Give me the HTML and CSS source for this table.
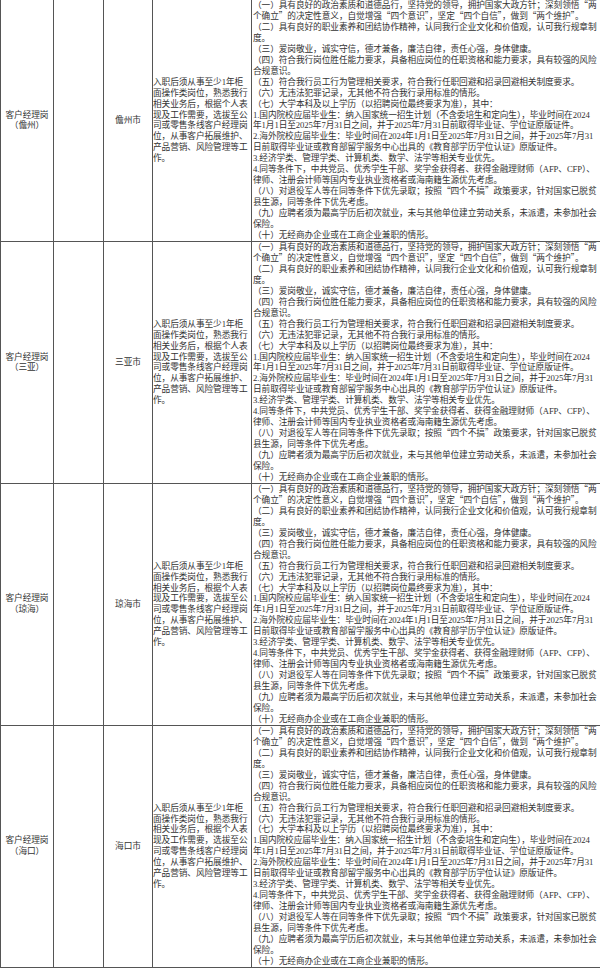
FILE: index.html
```html
<!DOCTYPE html>
<html lang="zh-CN">
<head>
<meta charset="utf-8">
<title>客户经理岗招聘条件</title>
<link rel="stylesheet" href="styles.css">
</head>
<body>
<table class="jobs">
<colgroup>
<col class="c-name"><col class="c-blank"><col class="c-city"><col class="c-duty"><col class="c-req">
</colgroup>
<tbody>
<tr>
<td class="name">客户经理岗<br>（儋州）</td>
<td class="blank"></td>
<td class="city">儋州市</td>
<td class="duty">入职后须从事至少1年柜<br>面操作类岗位，熟悉我行<br>相关业务后，根据个人表<br>现及工作需要，选拔至公<br>司或零售条线客户经理岗<br>位，从事客户拓展维护、<br>产品营销、风险管理等工<br>作。</td>
<td class="req">（一）具有良好的政治素质和道德品行，坚持党的领导，拥护国家大政方针；深刻领悟<span class="q">“</span>两<br>个确立<span class="q">”</span>的决定性意义，自觉增强<span class="q">“</span>四个意识<span class="q">”</span>，坚定<span class="q">“</span>四个自信<span class="q">”</span>，做到<span class="q">“</span>两个维护<span class="q">”</span>。<br>（二）具有良好的职业素养和团结协作精神，认同我行企业文化和价值观，认可我行规章制<br>度。<br>（三）爱岗敬业，诚实守信，德才兼备，廉洁自律，责任心强，身体健康。<br>（四）符合我行岗位胜任能力要求，具备相应岗位的任职资格和能力要求，具有较强的风险<br>合规意识。<br>（五）符合我行员工行为管理相关要求，符合我行任职回避和招录回避相关制度要求。<br>（六）无违法犯罪记录，无其他不符合我行录用标准的情形。<br>（七）大学本科及以上学历（以招聘岗位最终要求为准），其中：<br>1.国内院校应届毕业生：纳入国家统一招生计划（不含委培生和定向生），毕业时间在2024<br>年1月1日至2025年7月31日之间，并于2025年7月31日前取得毕业证、学位证原版证件。<br>2.海外院校应届毕业生：毕业时间在2024年1月1日至2025年7月31日之间，并于2025年7月31<br>日前取得毕业证或教育部留学服务中心出具的《教育部学历学位认证》原版证件。<br>3.经济学类、管理学类、计算机类、数学、法学等相关专业优先。<br>4.同等条件下，中共党员、优秀学生干部、奖学金获得者、获得金融理财师（AFP、CFP）、<br>律师、注册会计师等国内专业执业资格者或海南籍生源优先考虑。<br>（八）对退役军人等在同等条件下优先录取；按照<span class="q">“</span>四个不搞<span class="q">”</span>政策要求，针对国家已脱贫<br>县生源，同等条件下优先考虑。<br>（九）应聘者须为最高学历后初次就业，未与其他单位建立劳动关系，未派遣，未参加社会<br>保险。<br>（十）无经商办企业或在工商企业兼职的情形。</td>
</tr>
<tr>
<td class="name">客户经理岗<br>（三亚）</td>
<td class="blank"></td>
<td class="city">三亚市</td>
<td class="duty">入职后须从事至少1年柜<br>面操作类岗位，熟悉我行<br>相关业务后，根据个人表<br>现及工作需要，选拔至公<br>司或零售条线客户经理岗<br>位，从事客户拓展维护、<br>产品营销、风险管理等工<br>作。</td>
<td class="req">（一）具有良好的政治素质和道德品行，坚持党的领导，拥护国家大政方针；深刻领悟<span class="q">“</span>两<br>个确立<span class="q">”</span>的决定性意义，自觉增强<span class="q">“</span>四个意识<span class="q">”</span>，坚定<span class="q">“</span>四个自信<span class="q">”</span>，做到<span class="q">“</span>两个维护<span class="q">”</span>。<br>（二）具有良好的职业素养和团结协作精神，认同我行企业文化和价值观，认可我行规章制<br>度。<br>（三）爱岗敬业，诚实守信，德才兼备，廉洁自律，责任心强，身体健康。<br>（四）符合我行岗位胜任能力要求，具备相应岗位的任职资格和能力要求，具有较强的风险<br>合规意识。<br>（五）符合我行员工行为管理相关要求，符合我行任职回避和招录回避相关制度要求。<br>（六）无违法犯罪记录，无其他不符合我行录用标准的情形。<br>（七）大学本科及以上学历（以招聘岗位最终要求为准），其中：<br>1.国内院校应届毕业生：纳入国家统一招生计划（不含委培生和定向生），毕业时间在2024<br>年1月1日至2025年7月31日之间，并于2025年7月31日前取得毕业证、学位证原版证件。<br>2.海外院校应届毕业生：毕业时间在2024年1月1日至2025年7月31日之间，并于2025年7月31<br>日前取得毕业证或教育部留学服务中心出具的《教育部学历学位认证》原版证件。<br>3.经济学类、管理学类、计算机类、数学、法学等相关专业优先。<br>4.同等条件下，中共党员、优秀学生干部、奖学金获得者、获得金融理财师（AFP、CFP）、<br>律师、注册会计师等国内专业执业资格者或海南籍生源优先考虑。<br>（八）对退役军人等在同等条件下优先录取；按照<span class="q">“</span>四个不搞<span class="q">”</span>政策要求，针对国家已脱贫<br>县生源，同等条件下优先考虑。<br>（九）应聘者须为最高学历后初次就业，未与其他单位建立劳动关系，未派遣，未参加社会<br>保险。<br>（十）无经商办企业或在工商企业兼职的情形。</td>
</tr>
<tr>
<td class="name">客户经理岗<br>（琼海）</td>
<td class="blank"></td>
<td class="city">琼海市</td>
<td class="duty">入职后须从事至少1年柜<br>面操作类岗位，熟悉我行<br>相关业务后，根据个人表<br>现及工作需要，选拔至公<br>司或零售条线客户经理岗<br>位，从事客户拓展维护、<br>产品营销、风险管理等工<br>作。</td>
<td class="req">（一）具有良好的政治素质和道德品行，坚持党的领导，拥护国家大政方针；深刻领悟<span class="q">“</span>两<br>个确立<span class="q">”</span>的决定性意义，自觉增强<span class="q">“</span>四个意识<span class="q">”</span>，坚定<span class="q">“</span>四个自信<span class="q">”</span>，做到<span class="q">“</span>两个维护<span class="q">”</span>。<br>（二）具有良好的职业素养和团结协作精神，认同我行企业文化和价值观，认可我行规章制<br>度。<br>（三）爱岗敬业，诚实守信，德才兼备，廉洁自律，责任心强，身体健康。<br>（四）符合我行岗位胜任能力要求，具备相应岗位的任职资格和能力要求，具有较强的风险<br>合规意识。<br>（五）符合我行员工行为管理相关要求，符合我行任职回避和招录回避相关制度要求。<br>（六）无违法犯罪记录，无其他不符合我行录用标准的情形。<br>（七）大学本科及以上学历（以招聘岗位最终要求为准），其中：<br>1.国内院校应届毕业生：纳入国家统一招生计划（不含委培生和定向生），毕业时间在2024<br>年1月1日至2025年7月31日之间，并于2025年7月31日前取得毕业证、学位证原版证件。<br>2.海外院校应届毕业生：毕业时间在2024年1月1日至2025年7月31日之间，并于2025年7月31<br>日前取得毕业证或教育部留学服务中心出具的《教育部学历学位认证》原版证件。<br>3.经济学类、管理学类、计算机类、数学、法学等相关专业优先。<br>4.同等条件下，中共党员、优秀学生干部、奖学金获得者、获得金融理财师（AFP、CFP）、<br>律师、注册会计师等国内专业执业资格者或海南籍生源优先考虑。<br>（八）对退役军人等在同等条件下优先录取；按照<span class="q">“</span>四个不搞<span class="q">”</span>政策要求，针对国家已脱贫<br>县生源，同等条件下优先考虑。<br>（九）应聘者须为最高学历后初次就业，未与其他单位建立劳动关系，未派遣，未参加社会<br>保险。<br>（十）无经商办企业或在工商企业兼职的情形。</td>
</tr>
<tr>
<td class="name">客户经理岗<br>（海口）</td>
<td class="blank"></td>
<td class="city">海口市</td>
<td class="duty">入职后须从事至少1年柜<br>面操作类岗位，熟悉我行<br>相关业务后，根据个人表<br>现及工作需要，选拔至公<br>司或零售条线客户经理岗<br>位，从事客户拓展维护、<br>产品营销、风险管理等工<br>作。</td>
<td class="req">（一）具有良好的政治素质和道德品行，坚持党的领导，拥护国家大政方针；深刻领悟<span class="q">“</span>两<br>个确立<span class="q">”</span>的决定性意义，自觉增强<span class="q">“</span>四个意识<span class="q">”</span>，坚定<span class="q">“</span>四个自信<span class="q">”</span>，做到<span class="q">“</span>两个维护<span class="q">”</span>。<br>（二）具有良好的职业素养和团结协作精神，认同我行企业文化和价值观，认可我行规章制<br>度。<br>（三）爱岗敬业，诚实守信，德才兼备，廉洁自律，责任心强，身体健康。<br>（四）符合我行岗位胜任能力要求，具备相应岗位的任职资格和能力要求，具有较强的风险<br>合规意识。<br>（五）符合我行员工行为管理相关要求，符合我行任职回避和招录回避相关制度要求。<br>（六）无违法犯罪记录，无其他不符合我行录用标准的情形。<br>（七）大学本科及以上学历（以招聘岗位最终要求为准），其中：<br>1.国内院校应届毕业生：纳入国家统一招生计划（不含委培生和定向生），毕业时间在2024<br>年1月1日至2025年7月31日之间，并于2025年7月31日前取得毕业证、学位证原版证件。<br>2.海外院校应届毕业生：毕业时间在2024年1月1日至2025年7月31日之间，并于2025年7月31<br>日前取得毕业证或教育部留学服务中心出具的《教育部学历学位认证》原版证件。<br>3.经济学类、管理学类、计算机类、数学、法学等相关专业优先。<br>4.同等条件下，中共党员、优秀学生干部、奖学金获得者、获得金融理财师（AFP、CFP）、<br>律师、注册会计师等国内专业执业资格者或海南籍生源优先考虑。<br>（八）对退役军人等在同等条件下优先录取；按照<span class="q">“</span>四个不搞<span class="q">”</span>政策要求，针对国家已脱贫<br>县生源，同等条件下优先考虑。<br>（九）应聘者须为最高学历后初次就业，未与其他单位建立劳动关系，未派遣，未参加社会<br>保险。<br>（十）无经商办企业或在工商企业兼职的情形。</td>
</tr>
</tbody>
</table>
</body>
</html>
```
FILE: styles.css
```css
html, body {
  margin: 0;
  padding: 0;
  background: #ffffff;
  overflow: hidden;
}

body {
  font-family: "Liberation Serif", "Noto Sans CJK SC", serif;
  font-size: 8.7px;
  line-height: 10.95px;
  letter-spacing: -0.1px;
  color: #333333;
}

.jobs {
  border-collapse: collapse;
  table-layout: fixed;
  width: 611px;
}

.c-name { width: 53px; }
.c-blank { width: 50px; }
.c-city { width: 49px; }
.c-duty { width: 99px; }
.c-req { width: 360px; }

.jobs td {
  border: 1px solid #555555;
  padding: 0;
  vertical-align: middle;
  white-space: nowrap;
  overflow: hidden;
}

.jobs tr:first-child td {
  border-top: none;
}

.name,
.city {
  text-align: center;
}

.duty {
  padding-left: 1px;
  text-align: left;
}

.jobs td.req {
  vertical-align: top;
  text-align: left;
  padding-left: 1px;
}

.q {
  font-family: "Noto Sans CJK SC", sans-serif;
}
```
